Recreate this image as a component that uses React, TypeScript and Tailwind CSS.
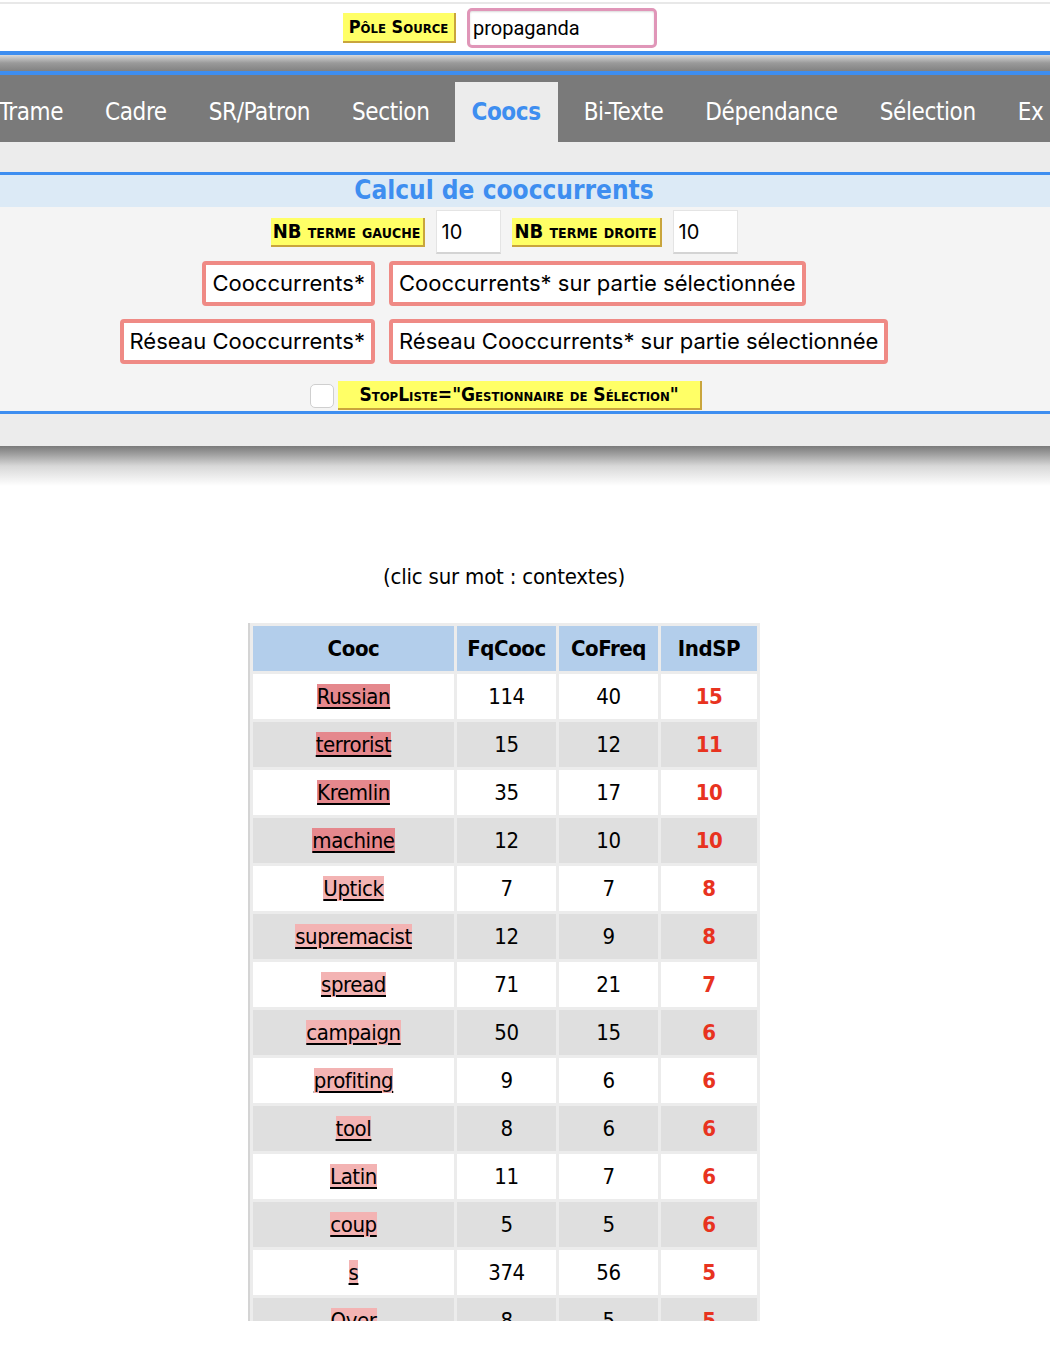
import React from "react";

const tahoma = "font-['DejaVu_Sans_Condensed','DejaVu_Sans',sans-serif] [font-stretch:condensed]";
const ui = "font-['Inter','Roboto',sans-serif]";

const tabs = ["Trame", "Cadre", "SR/Patron", "Section", "Coocs", "Bi-Texte", "Dépendance", "Sélection", "Ex"];

const rows: [string, number, number, number][] = [
    ["Russian", 114, 40, 15],
    ["terrorist", 15, 12, 11],
    ["Kremlin", 35, 17, 10],
    ["machine", 12, 10, 10],
    ["Uptick", 7, 7, 8],
    ["supremacist", 12, 9, 8],
    ["spread", 71, 21, 7],
    ["campaign", 50, 15, 6],
    ["profiting", 9, 6, 6],
    ["tool", 8, 6, 6],
    ["Latin", 11, 7, 6],
    ["coup", 5, 5, 6],
    ["s", 374, 56, 5],
    ["Over", 8, 5, 5],
];

function Label({ children, className = "" }: { children: React.ReactNode; className?: string }) {
    return (
        <span
            className={`${tahoma} inline-flex items-center justify-center whitespace-nowrap bg-[#ffff66] border-r-2 border-b-2 border-[#c9a53c] font-bold text-black [font-variant:small-caps] leading-none ${className}`}
        >
            {children}
        </span>
    );
}

function Btn({ children }: { children: React.ReactNode }) {
    return (
        <button className={`${ui} h-[45px] px-[6px] bg-white border-4 border-[#ef8a85] rounded-[4px] text-[22px] text-black whitespace-nowrap`}>
            {children}
        </button>
    );
}

function NumBox() {
    return (
        <div className={`${ui} w-[65px] h-[44px] bg-white border border-[#e4e4e4] border-b-2 border-b-[#d4d4d4] flex items-center pl-[5px] text-[20px] text-black`}>
            10
        </div>
    );
}

export default function App() {
    return (
        <div className="w-[1050px] h-[1354px] bg-white overflow-hidden">
            {/* top strip */}
            <div className="h-[2px]" />
            <div className="h-[2px] bg-[#e8e8e8]" />

            {/* pole source */}
            <div className="w-[1008px] h-[47px] flex items-center justify-center gap-[11px] pr-[8px]">
                <Label className="h-[30px] text-[18px] w-[113px]">Pôle Source</Label>
                <div className="font-['Roboto',sans-serif] w-[190px] h-[40px] border-[3px] border-[#e096b8] rounded-[5px] flex items-center pl-[3px] text-[20px] text-black shadow-[inset_0_1px_2px_rgba(0,0,0,0.15)]">
                    propaganda
                </div>
            </div>

            <div className="h-[4px] bg-[#3e8ef0]" />
            <div className="h-[16px] bg-gradient-to-b from-[#dadada] via-[#9a9a9a] to-[#828282]" />
            <div className="h-[4px] bg-[#3e8ef0]" />

            {/* tabs */}
            <div className="h-[67px] bg-[#7a7a7a] flex items-end overflow-hidden">
                <div className="flex ml-[-22px]">
                    {tabs.map((t) => (
                        <div
                            key={t}
                            className={`${tahoma} h-[60px] flex items-center text-[24px] tracking-[-0.4px] whitespace-nowrap ${
                                t === "Coocs" ? "bg-[#ececec] text-[#3e8ef0] font-bold mx-[5px] pl-[16px] pr-[17px]" : "text-white px-[21px]"
                            }`}
                        >
                            {t}
                        </div>
                    ))}
                </div>
            </div>
            <div className="h-[30px] bg-[#ececec]" />

            {/* coocs panel */}
            <div className="h-[3px] bg-[#3e8ef0]" />
            <div className="h-[32px] bg-[#dceaf6] flex items-center">
                <div className="w-[1008px] text-center">
                    <span className={`${tahoma} text-[26px] font-bold text-[#3e8ef0] leading-none`}>Calcul de cooccurrents</span>
                </div>
            </div>
            <div className="h-[204px] bg-[#f4f4f4]">
                <div className="w-[1008px] flex flex-col items-center pt-[3px]">
                    <div className="h-[44px] flex items-center gap-[11px]">
                        <Label className="h-[29px] text-[20px] w-[154px]">NB terme gauche</Label>
                        <NumBox />
                        <Label className="h-[29px] text-[20px] w-[150px]">NB terme droite</Label>
                        <NumBox />
                    </div>
                    <div className="mt-[7px] flex gap-[14px]">
                        <Btn>Cooccurrents*</Btn>
                        <Btn>Cooccurrents* sur partie sélectionnée</Btn>
                    </div>
                    <div className="mt-[13px] flex gap-[14px]">
                        <Btn>Réseau Cooccurrents*</Btn>
                        <Btn>Réseau Cooccurrents* sur partie sélectionnée</Btn>
                    </div>
                    <div className="mt-[17px] h-[29px] flex items-center gap-[4px] pl-[4px]">
                        <span className="w-[24px] h-[24px] rounded-[5px] border border-[#cfcfcf] bg-white" />
                        <Label className="h-[29px] text-[19px] w-[364px]">StopListe="Gestionnaire de Sélection"</Label>
                    </div>
                </div>
            </div>
            <div className="h-[3px] bg-[#3e8ef0]" />
            <div className="h-[32px] bg-[#ececec]" />
            <div className="h-[40px] bg-gradient-to-b from-[#7a7a7a] via-[#d8d8d8] to-white" />

            {/* results */}
            <div className="w-[1008px] flex flex-col items-center">
                <div className={`${tahoma} mt-[80px] text-[22px] text-black tracking-[-0.2px] leading-none`}>(clic sur mot : contextes)</div>
                <div className="mt-[35px] h-[698px] overflow-hidden">
                    <table className={`${tahoma} w-[512px] table-fixed border-separate border-spacing-[3px] bg-[#ececec] border-l-2 border-[#d4d4d4] text-[22px] text-black tracking-[-0.4px]`}>
                        <thead>
                            <tr className="h-[45px] bg-[#b3ceeb] font-bold">
                                <th className="w-[201px]">Cooc</th>
                                <th className="w-[99px]">FqCooc</th>
                                <th className="w-[99px]">CoFreq</th>
                                <th>IndSP</th>
                            </tr>
                        </thead>
                        <tbody>
                            {rows.map(([w, fq, cf, ind], i) => (
                                <tr key={w} className={`h-[45px] text-center ${i % 2 ? "bg-[#dfdfdf]" : "bg-white"}`}>
                                    <td>
                                        <a
                                            href="#"
                                            className={`underline decoration-2 underline-offset-[3px] text-black ${ind >= 10 ? "bg-[#e5888d]" : "bg-[#f3b3b3]"}`}
                                        >
                                            {w}
                                        </a>
                                    </td>
                                    <td>{fq}</td>
                                    <td>{cf}</td>
                                    <td className="font-bold text-[#e8331f]">{ind}</td>
                                </tr>
                            ))}
                        </tbody>
                    </table>
                </div>
            </div>
        </div>
    );
}
